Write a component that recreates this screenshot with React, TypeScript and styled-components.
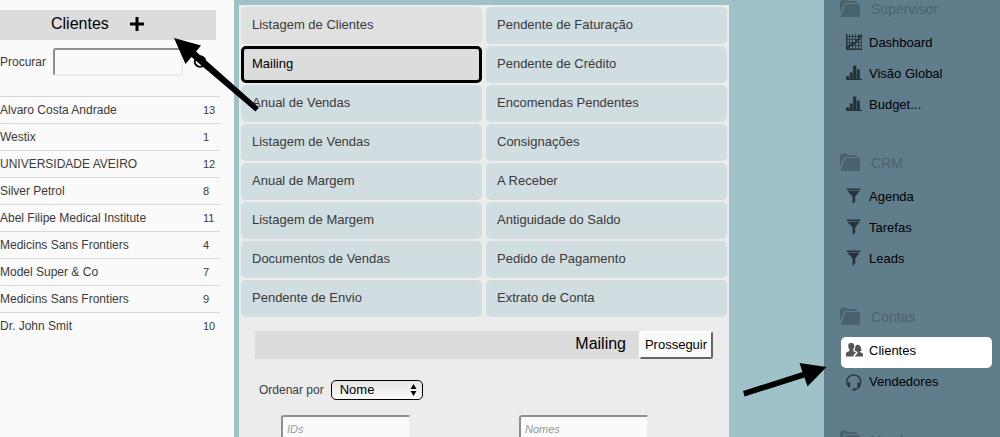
import React from "react";
import styled, { createGlobalStyle } from "styled-components";

const GlobalStyle = createGlobalStyle`
  *, *::before, *::after { box-sizing: border-box; }
  body {
    margin: 0;
    background: #9fc2c9;
    color: #3a3a3a;
    font-family: "Liberation Sans", Arial, Helvetica, sans-serif;
    font-size: 13px;
  }
  button, input, select { font: inherit; margin: 0; }
  ul { list-style: none; margin: 0; padding: 0; }
  h1, h2, h3 { margin: 0; font-weight: 400; }
`;

const Shell = styled.div`
  display: grid;
  grid-template-columns: 234px minmax(0, 1fr) 176px;
  height: 100vh;
  overflow: hidden;
`;

const ClientsPane = styled.aside`
  position: relative;
  padding-top: 10px;
  background: #fafafa;
`;

const ClientsHeader = styled.header`
  display: flex;
  align-items: center;
  gap: 21px;
  height: 30px;
  margin-right: 18px;
  padding: 0 0 2px 51px;
  background: #dcdcdc;
  color: #000;
`;

const Title = styled.h1`
  font-size: 16px;
  line-height: 20px;
`;

const IconButton = styled.button`
  display: flex;
  padding: 0;
  border: 0;
  background: none;
  color: #000;
  cursor: pointer;
`;

const SearchForm = styled.form`
  display: flex;
  align-items: center;
  height: 28px;
  margin: 8px 0 20px;
  font-size: 12px;
`;

const SearchLabel = styled.label`
  width: 53px;
`;

const TextField = styled.input`
  width: 130px;
  height: 28px;
  padding: 0 4px;
  border: 2px solid;
  border-color: #8f8f8f #ececec #ececec #8f8f8f;
  border-radius: 3px;
  background: #fafafa;
  font-size: 11px;
  &::placeholder {
    color: #999;
    font-style: italic;
    opacity: 1;
  }
`;

const SearchButton = styled(IconButton)`
  margin-left: 10px;
`;

const ClientTable = styled.table`
  width: 220px;
  border-collapse: collapse;
  border-top: 1px solid #d8d8d8;
  font-size: 12px;
  line-height: 16px;
`;

const ClientRow = styled.tr`
  height: 27px;
  & + & { border-top: 1px solid #d8d8d8; }
`;

const NameCell = styled.td`
  padding: 0;
`;

const CountCell = styled.td`
  width: 17px;
  padding: 0;
  font-size: 11px;
`;

const Main = styled.main`
  display: flex;
  padding: 5px 95px 0 5px;
  background: #9fc2c9;
`;

const Panel = styled.section`
  flex: 1;
  min-width: 0;
  padding: 2px;
  background: #ececec;
`;

const ReportGrid = styled.div`
  display: grid;
  grid-template-columns: 1fr 1fr;
  gap: 2px 4px;
`;

type Tone = "normal" | "visited" | "active";

const tones: Record<Tone, string> = {
  normal: "#d0dde1",
  visited: "#e0e0e0",
  active: "#dcdcdc",
};

const ReportButton = styled.button<{ $tone: Tone }>`
  height: 37px;
  padding: 0 8px 2px;
  border: 3px solid ${({ $tone }) => ($tone === "active" ? "#000" : "transparent")};
  border-radius: 5px;
  background: ${({ $tone }) => tones[$tone]} border-box;
  color: ${({ $tone }) => ($tone === "active" ? "#000" : "#3a3a3a")};
  text-align: left;
  cursor: pointer;
`;

const MailingForm = styled.form`
  margin: 14px 14px 0;
`;

const FormBar = styled.div`
  display: flex;
  align-items: center;
  justify-content: flex-end;
  gap: 13px;
  height: 28px;
  background: #dcdcdc;
  color: #000;
`;

const FormTitle = styled.h2`
  padding-bottom: 2px;
  font-size: 16px;
  line-height: 20px;
`;

const SubmitButton = styled.button`
  width: 74px;
  height: 28px;
  padding: 0 0 2px;
  border: 2px solid;
  border-color: #fff #666 #666 #fff;
  border-radius: 3px;
  background: #fafafa;
  color: #000;
  cursor: pointer;
`;

const SortRow = styled.div`
  display: flex;
  align-items: center;
  gap: 7px;
  margin: 21px 0 15px 4px;
  font-size: 12px;
`;

const SelectBox = styled.span`
  display: grid;
  align-items: center;
  width: 92px;
  & > * { grid-area: 1 / 1; }
  svg {
    justify-self: end;
    margin-right: 6px;
    pointer-events: none;
  }
`;

const Select = styled.select`
  appearance: none;
  width: 100%;
  height: 20px;
  padding: 0 8px 2px;
  border: 1px solid #000;
  border-radius: 5px;
  background: linear-gradient(#e4e4e4, #fafafa);
  color: #000;
  font-size: 13px;
`;

const FieldRow = styled.div`
  display: grid;
  grid-template-columns: 1fr 1fr;
  gap: 44px;
  padding-left: 26px;
`;

const Nav = styled.nav`
  position: relative;
  background: #607d8b;
`;

const NavGroups = styled.div`
  display: grid;
  gap: 31px;
  margin: -1px 8px 0 16px;
`;

const NavHeading = styled.h3`
  display: flex;
  align-items: flex-start;
  gap: 11px;
  height: 18px;
  margin-bottom: 12px;
  color: #4a626e;
  font-size: 14px;
  line-height: 20px;
`;

const NavLink = styled.a<{ $active?: boolean }>`
  display: flex;
  align-items: center;
  gap: 6px;
  height: 31px;
  margin-left: 1px;
  padding: 0 5px 4px;
  border-radius: 5px;
  background: ${({ $active }) => ($active ? "#fff" : "transparent")};
  color: #000;
  text-decoration: none;
  svg { color: ${({ $active }) => ($active ? "#555" : "#263238")}; }
`;

const Pointer = styled.svg<{ $left: number; $top: number }>`
  position: absolute;
  z-index: 2;
  left: ${({ $left }) => $left}px;
  top: ${({ $top }) => $top}px;
  pointer-events: none;
`;

const clients: [string, number][] = [
  ["Alvaro Costa Andrade", 13],
  ["Westix", 1],
  ["UNIVERSIDADE AVEIRO", 12],
  ["Silver Petrol", 8],
  ["Abel Filipe Medical Institute", 11],
  ["Medicins Sans Frontiers", 4],
  ["Model Super & Co", 7],
  ["Medicins Sans Frontiers", 9],
  ["Dr. John Smit", 10],
];

const reports: { label: string; tone?: Tone }[] = [
  { label: "Listagem de Clientes", tone: "visited" },
  { label: "Pendente de Faturação" },
  { label: "Mailing", tone: "active" },
  { label: "Pendente de Crédito" },
  { label: "Anual de Vendas" },
  { label: "Encomendas Pendentes" },
  { label: "Listagem de Vendas" },
  { label: "Consignações" },
  { label: "Anual de Margem" },
  { label: "A Receber" },
  { label: "Listagem de Margem" },
  { label: "Antiguidade do Saldo" },
  { label: "Documentos de Vendas" },
  { label: "Pedido de Pagamento" },
  { label: "Pendente de Envio" },
  { label: "Extrato de Conta" },
];

type IconName = "chart" | "bars" | "funnel" | "people" | "headset";

const groups: { title: string; items: { label: string; icon: IconName; active?: boolean }[] }[] = [
  {
    title: "Supervisor",
    items: [
      { label: "Dashboard", icon: "chart" },
      { label: "Visão Global", icon: "bars" },
      { label: "Budget...", icon: "bars" },
    ],
  },
  {
    title: "CRM",
    items: [
      { label: "Agenda", icon: "funnel" },
      { label: "Tarefas", icon: "funnel" },
      { label: "Leads", icon: "funnel" },
    ],
  },
  {
    title: "Contas",
    items: [
      { label: "Clientes", icon: "people", active: true },
      { label: "Vendedores", icon: "headset" },
    ],
  },
  { title: "Vendas", items: [] },
];

const glyphs: Record<IconName, React.ReactNode> = {
  chart: (
    <>
      <path d="M.7 0v15.300H16" fill="none" stroke="currentColor" strokeWidth="1.400" />
      <path
        d="M3.500 0v15M6.500 0v15M9.500 0v15M12.500 0v15M15.300 1v14M1 2.500h15M1 5.500h15M1 8.500h15M1 11.500h15"
        stroke="currentColor"
        strokeWidth=".8"
      />
      <path d="M1 14l4.500-3.500L9 9l3-4 3.500-3.500" fill="none" stroke="currentColor" strokeWidth="1.700" />
      <circle cx="14.800" cy="1.800" r="1.500" fill="currentColor" />
      <circle cx="6" cy="10.300" r="1.300" fill="currentColor" />
    </>
  ),
  bars: (
    <path
      d="M0 11.300h3.200V14H0zM3.700 7.500h3V14h-3zM7.100.5h3.200V14H7.100zM10.800 4.500h3V14h-3zM0 13.700h16V15H0z"
      fill="currentColor"
    />
  ),
  funnel: (
    <>
      <path d="M.8.500h13.400v1.600H.8z" fill="currentColor" />
      <path d="M1.300 2.700h12.400L9.200 8.500v5L6.600 16V8.500z" fill="currentColor" />
    </>
  ),
  people: (
    <>
      <path
        d="M4.500 1C2.600 1 2.200 2.500 2.300 4.500c.1 1.500.6 2.400 1.100 3v1.600C2.500 9.700 0 10 0 11.500V14.500h7.300c.2-2 1.600-3 2.900-3.700C9.500 9.900 7.700 9.800 7.200 9.100V7.500c.6-.6 1-1.600 1.100-3C8.400 2.500 7.500 1 5.800 1z"
        fill="currentColor"
      />
      <path
        d="M11.700 2.800c-2 0-2.500 1.700-2.600 3.400-.1 1-.4 1.600-.7 2.200.6.400 1.200.500 1.800.500l1.600 2.200-3.300 3.400H17v-2c0-1.300-2-1.700-3-2.400V8.900c.7 0 1.300-.1 1.800-.5-.8-1-.7-1.700-1-2.900-.3-1.500-1.200-2.700-3.100-2.700z"
        fill="currentColor"
      />
    </>
  ),
  headset: (
    <>
      <path
        d="M1.600 12A6.900 7 0 1 1 13.900 12Q13.500 15.500 8.500 16.500"
        fill="none"
        stroke="currentColor"
        strokeWidth="1.300"
      />
      <path
        d="M2.500 9.500h1.500v5H3.500C2 14 1.300 12.500 1.300 11zM13 9.500h-1.500v5h.5c1.500-.5 2.200-2 2.200-3.500z"
        fill="currentColor"
      />
      <ellipse cx="8" cy="16.700" rx="1.800" ry="1.100" fill="currentColor" />
    </>
  ),
};

const NavIcon = ({ name }: { name: IconName }) => (
  <svg width="17" height="18" viewBox="0 0 17 18" aria-hidden="true">
    {glyphs[name]}
  </svg>
);

const FolderIcon = () => (
  <svg width="20" height="18" viewBox="0 0 20 18" fill="currentColor" aria-hidden="true">
    <path d="M0 14V2.500L1.500.5H6L7.500 2H16q1.500 0 1.500 1.500V4H4.500z" />
    <path d="M5.500 5H20v13H.5z" />
  </svg>
);

export default function App() {
  return (
    <>
      <GlobalStyle />
      <Shell>
        <ClientsPane>
          <ClientsHeader>
            <Title>Clientes</Title>
            <IconButton type="button" aria-label="Adicionar cliente">
              <svg width="14" height="14" viewBox="0 0 14 14" aria-hidden="true">
                <path d="M7 0v14M0 7h14" stroke="currentColor" strokeWidth="3" />
              </svg>
            </IconButton>
          </ClientsHeader>
          <SearchForm onSubmit={(e) => e.preventDefault()}>
            <SearchLabel htmlFor="search">Procurar</SearchLabel>
            <TextField id="search" type="text" />
            <SearchButton type="submit" aria-label="Pesquisar">
              <svg width="14" height="14" viewBox="0 0 14 14" fill="none" stroke="currentColor" aria-hidden="true">
                <circle cx="7" cy="6.500" r="5.300" strokeWidth="1.800" />
                <path d="M10 10l2 2" strokeWidth="2" />
              </svg>
            </SearchButton>
          </SearchForm>
          <ClientTable>
            <tbody>
              {clients.map(([name, count]) => (
                <ClientRow key={count}>
                  <NameCell>{name}</NameCell>
                  <CountCell>{count}</CountCell>
                </ClientRow>
              ))}
            </tbody>
          </ClientTable>
          <Pointer $left={170} $top={34} width="92" height="82" viewBox="0 0 92 82" aria-hidden="true">
            <path d="M4 4l27 7.500-5 6L89 73.500l-3.500 4L21.500 23l-6 7z" />
          </Pointer>
        </ClientsPane>

        <Main>
          <Panel>
            <ReportGrid>
              {reports.map(({ label, tone = "normal" }) => (
                <ReportButton key={label} type="button" $tone={tone}>
                  {label}
                </ReportButton>
              ))}
            </ReportGrid>
            <MailingForm onSubmit={(e) => e.preventDefault()}>
              <FormBar>
                <FormTitle>Mailing</FormTitle>
                <SubmitButton type="submit">Prosseguir</SubmitButton>
              </FormBar>
              <SortRow>
                <label htmlFor="sort">Ordenar por</label>
                <SelectBox>
                  <Select id="sort" defaultValue="Nome">
                    <option>Nome</option>
                  </Select>
                  <svg width="7" height="12" viewBox="0 0 7 12" aria-hidden="true">
                    <path d="M3.500 0L6.500 5h-6zM3.500 12L.5 7h6z" />
                  </svg>
                </SelectBox>
              </SortRow>
              <FieldRow>
                <TextField type="text" placeholder="IDs" aria-label="IDs" />
                <TextField type="text" placeholder="Nomes" aria-label="Nomes" />
              </FieldRow>
            </MailingForm>
          </Panel>
        </Main>

        <Nav>
          <NavGroups>
            {groups.map(({ title, items }) => (
              <section key={title}>
                <NavHeading>
                  <FolderIcon />
                  {title}
                </NavHeading>
                <ul>
                  {items.map(({ label, icon, active }) => (
                    <li key={label}>
                      <NavLink href="#" $active={active}>
                        <NavIcon name={icon} />
                        {label}
                      </NavLink>
                    </li>
                  ))}
                </ul>
              </section>
            ))}
          </NavGroups>
          <Pointer $left={-84} $top={360} width="88" height="40" viewBox="0 0 88 40" aria-hidden="true">
            <path d="M86.500 7L59.500 3l3 9L3 31l1.500 5.500L64.500 17.500l3 9z" />
          </Pointer>
        </Nav>
      </Shell>
    </>
  );
}
